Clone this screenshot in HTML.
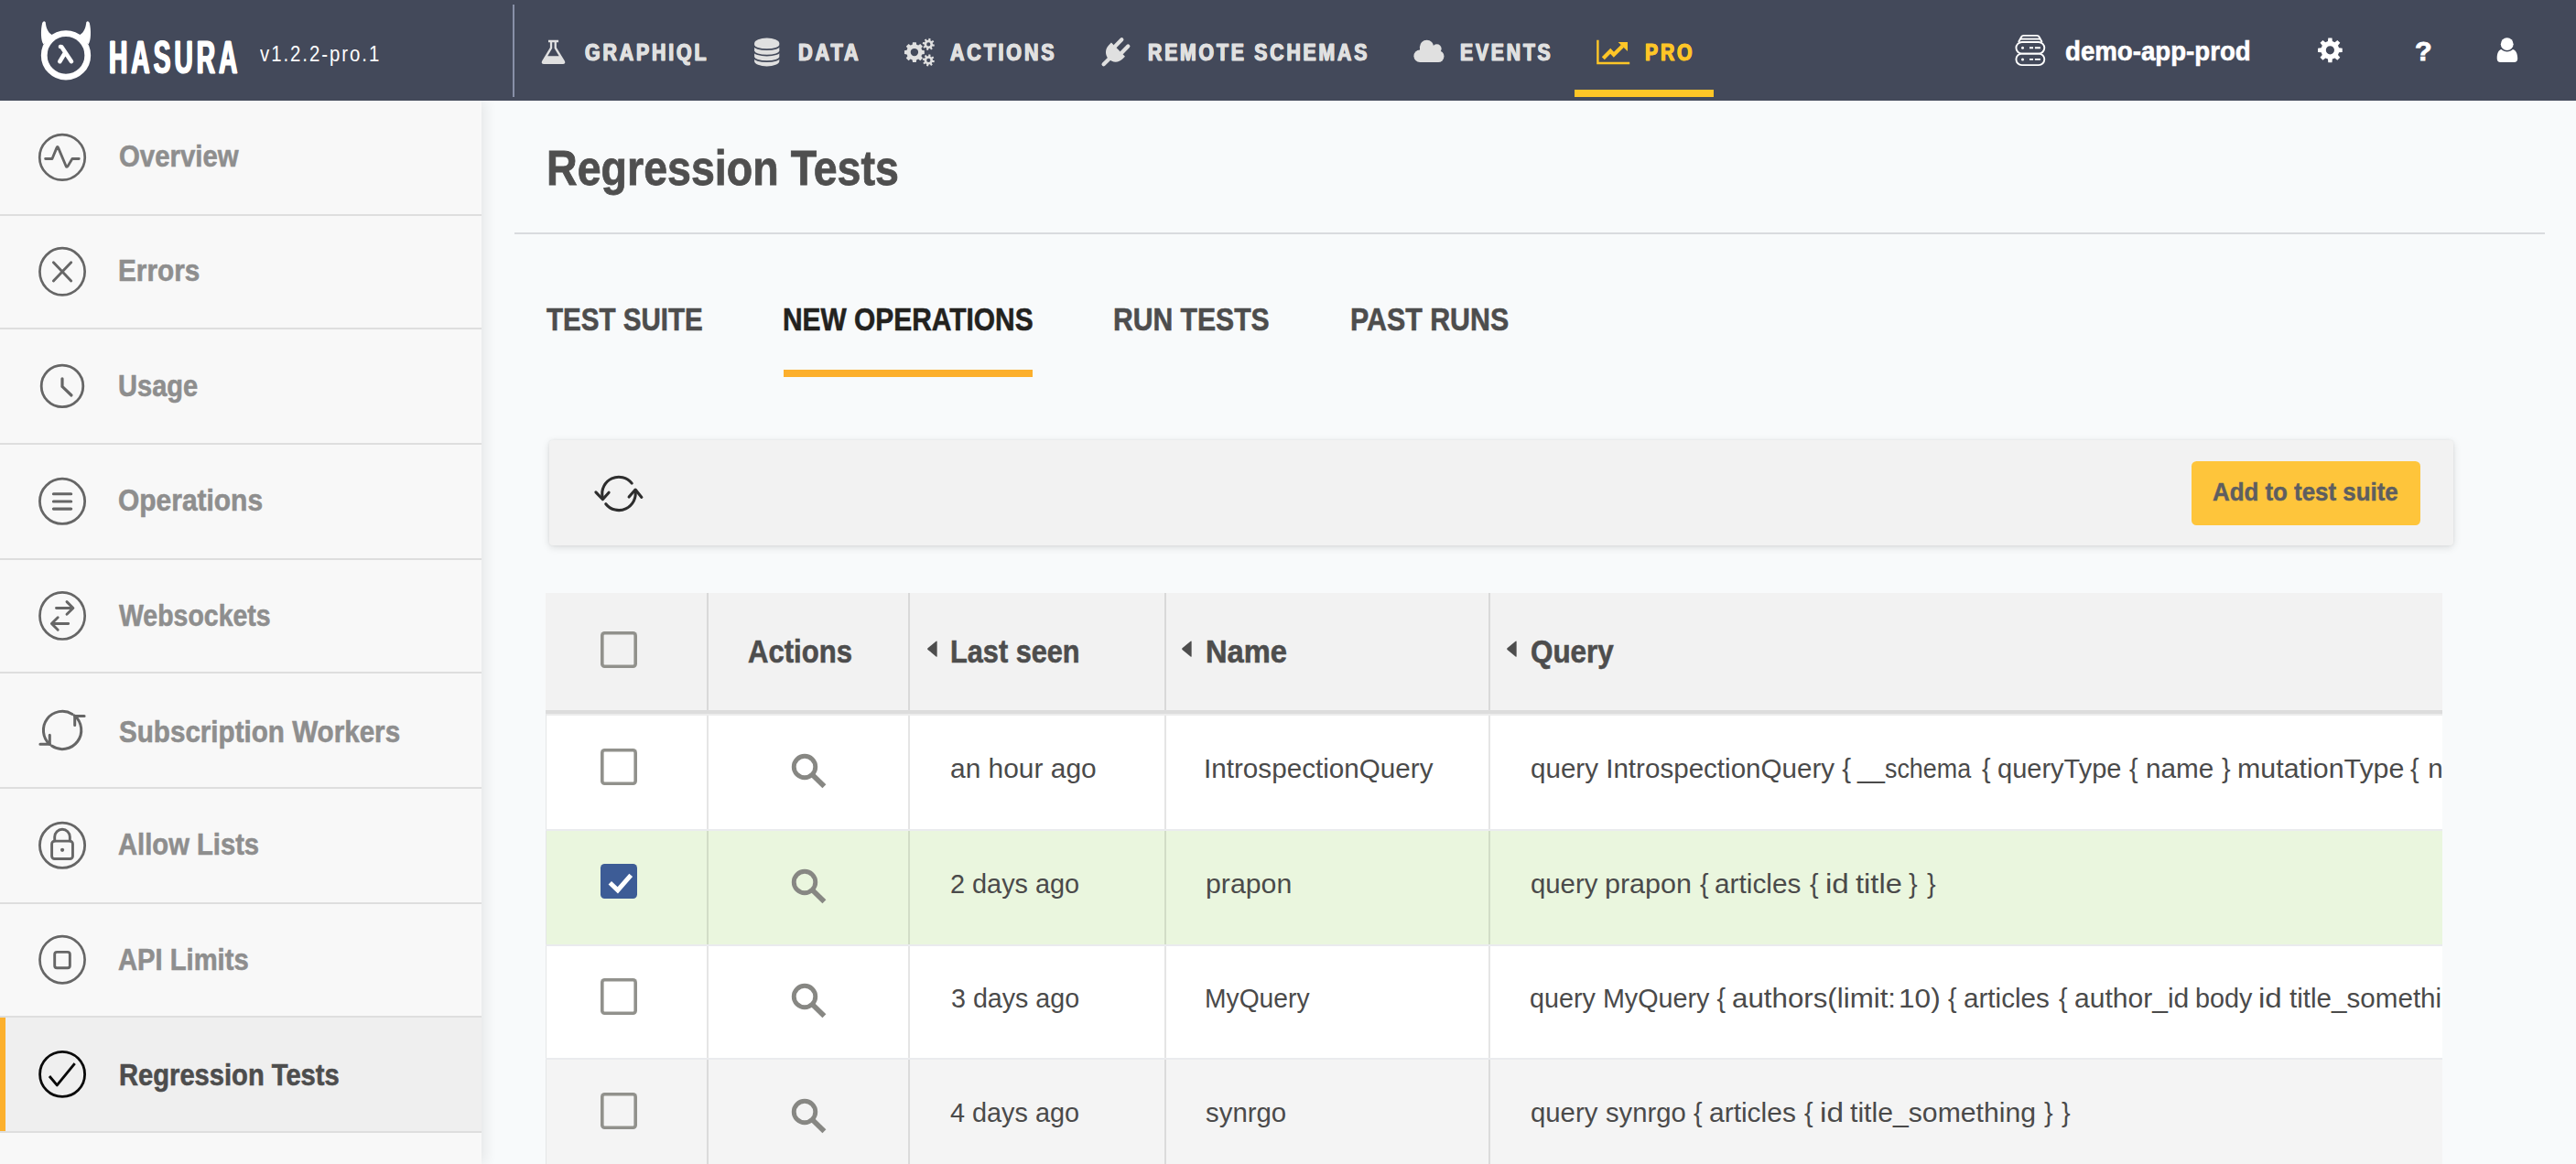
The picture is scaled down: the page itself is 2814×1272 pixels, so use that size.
<!DOCTYPE html>
<html lang="en">
<head>
<meta charset="utf-8">
<title>Regression Tests - Hasura Pro</title>
<style>
html,body{margin:0;padding:0}
body{width:2814px;height:1272px;overflow:hidden;position:relative;background:#f8fafb;font-family:"Liberation Sans",sans-serif}
.t{position:absolute;white-space:pre;line-height:1;transform-origin:0 50%;display:block;margin:0;padding:0}
header{position:absolute;left:0;top:0;width:2814px;height:109.7px;background:#43495a;z-index:5}
header .vdiv{position:absolute;left:560px;top:5px;width:2px;height:101px;background:#8890a8}
header .uline{position:absolute;left:1719.8px;top:97.6px;width:152.3px;height:8.6px;background:#fec627}
header svg{position:absolute}
aside{position:absolute;left:0;top:110px;width:526px;height:1162px;background:#f8f8f8;box-shadow:3px 0 14px rgba(0,0,0,0.09);z-index:3}
aside .sep{position:absolute;left:0;width:526px;height:2.1px;background:#dedede}
aside .active{position:absolute;left:0;top:1002.1px;width:526px;height:124.2px;background:#efefef}
aside .active i{position:absolute;left:0;top:0;width:5.9px;height:100%;background:#fcb02d}
aside svg{position:absolute;left:36px;top:0;width:64px;height:1162px}
main{position:absolute;left:0;top:0;width:2814px;height:1272px}
.hr{position:absolute;left:562px;top:254.1px;width:2218px;height:2px;background:#d9dbde}
.tabline{position:absolute;left:856px;top:403.9px;width:272px;height:7.9px;background:#fcaf2c}
.toolbar{position:absolute;left:599.9px;top:481.3px;width:2080.4px;height:114.7px;background:#f2f2f2;border-radius:4px;box-shadow:0 2px 8px rgba(0,0,0,0.13),0 0 3px rgba(0,0,0,0.06)}
.btn{position:absolute;left:2394px;top:504px;width:250.2px;height:69.8px;background:#fec53b;border-radius:5.5px}
.table{position:absolute;left:596px;top:648px;width:2072px;height:640px;overflow:hidden;background:#fff}
.thead{position:absolute;left:0;top:0;width:100%;height:128px;background:#f2f2f2;border-bottom:4px solid #dcdcdc}
.thead2{position:absolute;left:0;top:132px;width:100%;height:2px;background:#ececec}
.row{position:absolute;left:0;width:100%}
.rsep{position:absolute;left:0;width:100%;height:2px;background:#eaebee}
.lb{position:absolute;left:0;top:132px;width:1.4px;height:100%;background:#e4e6e7}
.col{position:absolute;width:2px;background:rgba(0,0,0,0.1)}
.col.h{top:0;height:128px}
.col.b{top:134px;height:520px}
.cb{position:absolute;left:656px;width:40px;height:40px;box-shadow:inset 0 0 0 3.6px #91918c;border-radius:4.5px}
.cb.on{background:#3d5c96;box-shadow:none;height:38.6px}
svg.abs{position:absolute}
</style>
</head>
<body>
<main>
<div class="hr"></div>
<div class="tabline"></div>
<div class="toolbar"></div>
<svg class="abs" style="left:640px;top:510px;width:72px;height:60px" viewBox="640 510 72 60" fill="none" stroke="#2e2e2e" stroke-width="3.1" stroke-linecap="round" stroke-linejoin="round">
<path d="M658.1 542.9 A18.2 18.2 0 0 1 690.2 528.1"/><path d="M693.9 535.9 A18.2 18.2 0 0 1 661.8 550.7"/>
<path d="M650.9 537.9 L658.4 545.7 L665.1 538.2"/><path d="M687.1 543.1 L694.1 535.1 L700.9 543.4"/>
</svg>
<div class="btn"></div>
<div class="table">
 <div class="thead"></div><div class="thead2"></div>
 <div class="row" style="top:134px;height:124px;background:#fff"></div>
 <div class="row" style="top:260px;height:124px;background:#eaf6de"></div>
 <div class="row" style="top:386px;height:122px;background:#fff"></div>
 <div class="row" style="top:510px;height:126px;background:#f4f4f4"></div>
 <div class="lb"></div>
 <div class="col h" style="left:176px"></div>
 <div class="col h" style="left:396px"></div>
 <div class="col h" style="left:676px"></div>
 <div class="col h" style="left:1030px"></div>
 <div class="col b" style="left:176px"></div>
 <div class="col b" style="left:396px"></div>
 <div class="col b" style="left:676px"></div>
 <div class="col b" style="left:1030px"></div>
 <div class="rsep" style="top:258px"></div>
 <div class="rsep" style="top:384px"></div>
 <div class="rsep" style="top:508px"></div>
<span class="t" style="left:1075.6px;top:177.1px;font-size:29.7px;font-weight:400;color:#4a4a4a;transform:scaleX(0.9963)">query IntrospectionQuery {</span>
<span class="t" style="left:1433.4px;top:177.1px;font-size:29.7px;font-weight:400;color:#4a4a4a;transform:scaleX(0.9066)">__schema</span>
<span class="t" style="left:1568.8px;top:177.1px;font-size:29.7px;font-weight:400;color:#4a4a4a;transform:scaleX(0.9700)">{</span>
<span class="t" style="left:1586.4px;top:177.1px;font-size:29.7px;font-weight:400;color:#4a4a4a;transform:scaleX(0.9772)">queryType</span>
<span class="t" style="left:1729.7px;top:177.1px;font-size:29.7px;font-weight:400;color:#4a4a4a;transform:scaleX(0.9700)">{</span>
<span class="t" style="left:1747.6px;top:177.1px;font-size:29.7px;font-weight:400;color:#4a4a4a;transform:scaleX(1.0014)">name</span>
<span class="t" style="left:1831.0px;top:177.1px;font-size:29.7px;font-weight:400;color:#4a4a4a;transform:scaleX(0.9700)">}</span>
<span class="t" style="left:1847.9px;top:177.1px;font-size:29.7px;font-weight:400;color:#4a4a4a;transform:scaleX(1.0234)">mutationType</span>
<span class="t" style="left:2037.2px;top:177.1px;font-size:29.7px;font-weight:400;color:#4a4a4a;transform:scaleX(0.9700)">{</span>
<span class="t" style="left:2056.2px;top:177.1px;font-size:29.7px;font-weight:400;color:#4a4a4a;transform:scaleX(1.0000)">name } subscriptionType { name } types { ...FullType } directives { name description locations args { ...InputValue } } } }</span>
<span class="t" style="left:1075.6px;top:302.5px;font-size:29.7px;font-weight:400;color:#4a4a4a;transform:scaleX(0.9877)">query</span>
<span class="t" style="left:1156.5px;top:302.5px;font-size:29.7px;font-weight:400;color:#4a4a4a;transform:scaleX(1.0270)">prapon</span>
<span class="t" style="left:1260.7px;top:302.5px;font-size:29.7px;font-weight:400;color:#4a4a4a;transform:scaleX(0.9700)">{</span>
<span class="t" style="left:1277.3px;top:302.5px;font-size:29.7px;font-weight:400;color:#4a4a4a;transform:scaleX(1.0043)">articles</span>
<span class="t" style="left:1380.9px;top:302.5px;font-size:29.7px;font-weight:400;color:#4a4a4a;transform:scaleX(0.9700)">{</span>
<span class="t" style="left:1397.7px;top:302.5px;font-size:29.7px;font-weight:400;color:#4a4a4a;transform:scaleX(1.1158)">id</span>
<span class="t" style="left:1430.5px;top:302.5px;font-size:29.7px;font-weight:400;color:#4a4a4a;transform:scaleX(1.1000)">title</span>
<span class="t" style="left:1489.3px;top:302.5px;font-size:29.7px;font-weight:400;color:#4a4a4a;transform:scaleX(0.9700)">}</span>
<span class="t" style="left:1509.0px;top:302.5px;font-size:29.7px;font-weight:400;color:#4a4a4a;transform:scaleX(0.9700)">}</span>
<span class="t" style="left:1075.1px;top:427.9px;font-size:29.7px;font-weight:400;color:#4a4a4a;transform:scaleX(0.9682)">query MyQuery {</span>
<span class="t" style="left:1296.0px;top:427.9px;font-size:29.7px;font-weight:400;color:#4a4a4a;transform:scaleX(1.0536)">authors(limit:</span>
<span class="t" style="left:1477.9px;top:427.9px;font-size:29.7px;font-weight:400;color:#4a4a4a;transform:scaleX(1.0641)">10)</span>
<span class="t" style="left:1531.7px;top:427.9px;font-size:29.7px;font-weight:400;color:#4a4a4a;transform:scaleX(0.9700)">{</span>
<span class="t" style="left:1548.7px;top:427.9px;font-size:29.7px;font-weight:400;color:#4a4a4a;transform:scaleX(0.9989)">articles</span>
<span class="t" style="left:1652.6px;top:427.9px;font-size:29.7px;font-weight:400;color:#4a4a4a;transform:scaleX(0.9700)">{</span>
<span class="t" style="left:1669.9px;top:427.9px;font-size:29.7px;font-weight:400;color:#4a4a4a;transform:scaleX(1.0124)">author_id</span>
<span class="t" style="left:1801.9px;top:427.9px;font-size:29.7px;font-weight:400;color:#4a4a4a;transform:scaleX(0.9710)">body</span>
<span class="t" style="left:1871.3px;top:427.9px;font-size:29.7px;font-weight:400;color:#4a4a4a;transform:scaleX(1.1158)">id</span>
<span class="t" style="left:1905.0px;top:427.9px;font-size:29.7px;font-weight:400;color:#4a4a4a;transform:scaleX(0.9970)">title_something } } }</span>
<span class="t" style="left:1075.6px;top:553.3px;font-size:29.7px;font-weight:400;color:#4a4a4a;transform:scaleX(0.9877)">query</span>
<span class="t" style="left:1157.6px;top:553.3px;font-size:29.7px;font-weight:400;color:#4a4a4a;transform:scaleX(0.9851)">synrgo</span>
<span class="t" style="left:1253.7px;top:553.3px;font-size:29.7px;font-weight:400;color:#4a4a4a;transform:scaleX(0.9700)">{</span>
<span class="t" style="left:1270.7px;top:553.3px;font-size:29.7px;font-weight:400;color:#4a4a4a;transform:scaleX(1.0087)">articles</span>
<span class="t" style="left:1374.8px;top:553.3px;font-size:29.7px;font-weight:400;color:#4a4a4a;transform:scaleX(0.9700)">{</span>
<span class="t" style="left:1391.5px;top:553.3px;font-size:29.7px;font-weight:400;color:#4a4a4a;transform:scaleX(1.1211)">id</span>
<span class="t" style="left:1424.8px;top:553.3px;font-size:29.7px;font-weight:400;color:#4a4a4a;transform:scaleX(1.0167)">title_something</span>
<span class="t" style="left:1637.1px;top:553.3px;font-size:29.7px;font-weight:400;color:#4a4a4a;transform:scaleX(0.9700)">}</span>
<span class="t" style="left:1656.1px;top:553.3px;font-size:29.7px;font-weight:400;color:#4a4a4a;transform:scaleX(0.9700)">}</span>
</div>
<div class="cb" style="top:690px"></div>
<div class="cb w" style="top:817.7px"></div>
<div class="cb on" style="top:943.6px"></div>
<div class="cb w" style="top:1068.5px"></div>
<div class="cb w" style="top:1193.9px"></div>
<svg class="abs" style="left:656px;top:943px;width:40px;height:40px" viewBox="656 943 40 40" fill="none" stroke="#fff" stroke-width="5"><path d="M666.3 964.8 L674.8 972.8 L689.2 956.3"/></svg>
<svg class="abs" style="left:1010.00px;top:697px;width:16px;height:24px" viewBox="1010 697 16 24"><path d="M1023.65 701.3 Q1023.65 699.9 1022.6 700.8 L1013.5 708.3 Q1012.7 709.1 1013.5 709.9 L1022.6 717.4 Q1023.65 718.3 1023.65 716.9 Z" fill="#4d4d4d"/></svg>
<svg class="abs" style="left:1288.45px;top:697px;width:16px;height:24px" viewBox="1010 697 16 24"><path d="M1023.65 701.3 Q1023.65 699.9 1022.6 700.8 L1013.5 708.3 Q1012.7 709.1 1013.5 709.9 L1022.6 717.4 Q1023.65 718.3 1023.65 716.9 Z" fill="#4d4d4d"/></svg>
<svg class="abs" style="left:1642.70px;top:697px;width:16px;height:24px" viewBox="1010 697 16 24"><path d="M1023.65 701.3 Q1023.65 699.9 1022.6 700.8 L1013.5 708.3 Q1012.7 709.1 1013.5 709.9 L1022.6 717.4 Q1023.65 718.3 1023.65 716.9 Z" fill="#4d4d4d"/></svg>
<svg class="abs" style="left:858.55px;top:818.40px;width:48px;height:48px" viewBox="-20 -20 48 48" fill="none" stroke="#878783"><circle cx="0" cy="0" r="11.75" stroke-width="4.9"/><path d="M8.3 8.4 L21.4 21.3" stroke-width="5.6"/></svg>
<svg class="abs" style="left:858.55px;top:943.80px;width:48px;height:48px" viewBox="-20 -20 48 48" fill="none" stroke="#878783"><circle cx="0" cy="0" r="11.75" stroke-width="4.9"/><path d="M8.3 8.4 L21.4 21.3" stroke-width="5.6"/></svg>
<svg class="abs" style="left:858.55px;top:1069.20px;width:48px;height:48px" viewBox="-20 -20 48 48" fill="none" stroke="#878783"><circle cx="0" cy="0" r="11.75" stroke-width="4.9"/><path d="M8.3 8.4 L21.4 21.3" stroke-width="5.6"/></svg>
<svg class="abs" style="left:858.55px;top:1194.60px;width:48px;height:48px" viewBox="-20 -20 48 48" fill="none" stroke="#878783"><circle cx="0" cy="0" r="11.75" stroke-width="4.9"/><path d="M8.3 8.4 L21.4 21.3" stroke-width="5.6"/></svg>
<span class="t" style="left:596.6px;top:156.9px;font-size:53.3px;font-weight:700;color:#4f4f4f;transform:scaleX(0.8741);-webkit-text-stroke:0.8px #4f4f4f">Regression Tests</span>
<span class="t" style="left:596.8px;top:332.3px;font-size:34.7px;font-weight:700;color:#4d4d4d;transform:scaleX(0.8518);-webkit-text-stroke:0.6px #4d4d4d">TEST SUITE</span>
<span class="t" style="left:855.0px;top:332.3px;font-size:34.7px;font-weight:700;color:#23221e;transform:scaleX(0.8621);-webkit-text-stroke:0.6px #23221e">NEW OPERATIONS</span>
<span class="t" style="left:1215.6px;top:332.3px;font-size:34.7px;font-weight:700;color:#4d4d4d;transform:scaleX(0.8680);-webkit-text-stroke:0.6px #4d4d4d">RUN TESTS</span>
<span class="t" style="left:1474.5px;top:332.3px;font-size:34.7px;font-weight:700;color:#4d4d4d;transform:scaleX(0.8754);-webkit-text-stroke:0.6px #4d4d4d">PAST RUNS</span>
<span class="t" style="left:2417.2px;top:524.1px;font-size:27.9px;font-weight:700;color:#5e5e60;transform:scaleX(0.9276);-webkit-text-stroke:0.5px #5e5e60">Add to test suite</span>
<span class="t" style="left:817.3px;top:694.3px;font-size:35.2px;font-weight:700;color:#4d4d4d;transform:scaleX(0.8831);-webkit-text-stroke:0.6px #4d4d4d">Actions</span>
<span class="t" style="left:1038.3px;top:694.3px;font-size:35.2px;font-weight:700;color:#4d4d4d;transform:scaleX(0.8723);-webkit-text-stroke:0.6px #4d4d4d">Last seen</span>
<span class="t" style="left:1316.9px;top:694.3px;font-size:35.2px;font-weight:700;color:#4d4d4d;transform:scaleX(0.9274);-webkit-text-stroke:0.6px #4d4d4d">Name</span>
<span class="t" style="left:1671.6px;top:694.3px;font-size:35.2px;font-weight:700;color:#4d4d4d;transform:scaleX(0.8921);-webkit-text-stroke:0.6px #4d4d4d">Query</span>
<span class="t" style="left:1038.1px;top:825.1px;font-size:29.7px;font-weight:400;color:#4a4a4a;transform:scaleX(1.0077)">an hour ago</span>
<span class="t" style="left:1315.3px;top:825.1px;font-size:29.7px;font-weight:400;color:#4a4a4a;transform:scaleX(0.9988)">IntrospectionQuery</span>
<span class="t" style="left:1037.7px;top:950.5px;font-size:29.7px;font-weight:400;color:#4a4a4a;transform:scaleX(0.9718)">2 days ago</span>
<span class="t" style="left:1316.8px;top:950.5px;font-size:29.7px;font-weight:400;color:#4a4a4a;transform:scaleX(1.0191)">prapon</span>
<span class="t" style="left:1038.6px;top:1075.9px;font-size:29.7px;font-weight:400;color:#4a4a4a;transform:scaleX(0.9650)">3 days ago</span>
<span class="t" style="left:1315.9px;top:1075.9px;font-size:29.7px;font-weight:400;color:#4a4a4a;transform:scaleX(0.9508)">MyQuery</span>
<span class="t" style="left:1037.8px;top:1201.3px;font-size:29.7px;font-weight:400;color:#4a4a4a;transform:scaleX(0.9706)">4 days ago</span>
<span class="t" style="left:1317.3px;top:1201.3px;font-size:29.7px;font-weight:400;color:#4a4a4a;transform:scaleX(0.9897)">synrgo</span>
</main>
<aside>
<div class="active"><i></i></div>
<div class="sep" style="top:124.00px"></div>
<div class="sep" style="top:247.90px"></div>
<div class="sep" style="top:374.05px"></div>
<div class="sep" style="top:499.85px"></div>
<div class="sep" style="top:623.80px"></div>
<div class="sep" style="top:749.85px"></div>
<div class="sep" style="top:875.90px"></div>
<div class="sep" style="top:1000.10px"></div>
<div class="sep" style="top:1126.30px"></div>
<svg viewBox="36 110 64 1162" fill="none" stroke="#666666" stroke-width="2.7" stroke-linecap="round" stroke-linejoin="round">
<ellipse cx="68" cy="171.9" rx="24.75" ry="24.75"/><path d="M49.6 173.5 H57 L61.9 161.6 Q62.8 159.4 63.7 161.6 L72 181.3 Q73 183.5 74.2 181.4 L78.9 173.5 H86.3" stroke-width="2.8"/>
<ellipse cx="68.05" cy="296.8" rx="24.6" ry="25.6"/><path d="M58.4 286.7 L77.7 306.9 M77.7 286.7 L58.4 306.9" stroke-width="2.9"/>
<circle cx="68" cy="421.9" r="22.8" stroke-width="2.8"/><path d="M68 413.8 V422.4 L78 432" stroke-width="3.2"/>
<circle cx="68.05" cy="547.8" r="24.6" stroke-width="2.8"/><path d="M58.4 539.8 H77.7 M58.4 548 H77.7 M58.4 556.1 H77.7" stroke-width="3.1"/>
<ellipse cx="68.1" cy="672.9" rx="24.6" ry="25.6"/><path d="M61.5 664.5 H79.4 M73 657.6 L79.9 664.5 L73 671.2 M74.7 681.5 H56.8 M63.2 674.7 L56.4 681.5 L63.2 688.2" stroke-width="2.9"/>
<g stroke-width="3"><path d="M81.15 781.89 A20.7 20.7 0 0 1 56.52 815.11"/><path d="M54.38 813.45 A20.7 20.7 0 0 1 79.07 780.40"/><path d="M92.1 782.6 H81.7 V792.6 M43.9 813.2 H54.3 V803.2"/></g>
<circle cx="68.05" cy="923.8" r="24.6" stroke-width="2.8"/><rect x="56.6" y="919.15" width="22.85" height="19.4" rx="3" stroke-width="2.9"/><path d="M59.7 919 V914.6 A8.3 8.3 0 0 1 76.35 914.6 V919" stroke-width="2.9"/><circle cx="68.07" cy="928.85" r="2.1" fill="#666666" stroke="none"/>
<ellipse cx="68.05" cy="1048.7" rx="24.55" ry="25.6"/><rect x="59.7" y="1040.4" width="16.65" height="17.35" rx="2.5" stroke-width="2.9"/>
<g stroke="#0a0a0a"><circle cx="68.1" cy="1173.9" r="24.5" stroke-width="2.8"/><path d="M54 1176 L62.3 1185.9 L81.7 1162.1" stroke-width="2.9" stroke-linecap="butt"/></g>
</svg>
<span class="t" style="left:129.5px;top:43.5px;font-size:33.5px;font-weight:700;color:#8e8e8e;transform:scaleX(0.8764);-webkit-text-stroke:0.6px #8e8e8e">Overview</span>
<span class="t" style="left:129.0px;top:169.0px;font-size:33.5px;font-weight:700;color:#8e8e8e;transform:scaleX(0.8878);-webkit-text-stroke:0.6px #8e8e8e">Errors</span>
<span class="t" style="left:129.3px;top:295.1px;font-size:33.5px;font-weight:700;color:#8e8e8e;transform:scaleX(0.8673);-webkit-text-stroke:0.6px #8e8e8e">Usage</span>
<span class="t" style="left:129.1px;top:420.0px;font-size:33.5px;font-weight:700;color:#8e8e8e;transform:scaleX(0.8937);-webkit-text-stroke:0.6px #8e8e8e">Operations</span>
<span class="t" style="left:129.6px;top:545.5px;font-size:33.5px;font-weight:700;color:#8e8e8e;transform:scaleX(0.8500);-webkit-text-stroke:0.6px #8e8e8e">Websockets</span>
<span class="t" style="left:130.1px;top:672.6px;font-size:33.5px;font-weight:700;color:#8e8e8e;transform:scaleX(0.8838);-webkit-text-stroke:0.6px #8e8e8e">Subscription Workers</span>
<span class="t" style="left:128.9px;top:795.6px;font-size:33.5px;font-weight:700;color:#8e8e8e;transform:scaleX(0.8714);-webkit-text-stroke:0.6px #8e8e8e">Allow Lists</span>
<span class="t" style="left:128.9px;top:922.0px;font-size:33.5px;font-weight:700;color:#8e8e8e;transform:scaleX(0.8710);-webkit-text-stroke:0.6px #8e8e8e">API Limits</span>
<span class="t" style="left:129.9px;top:1047.5px;font-size:33.5px;font-weight:700;color:#4d4d4d;transform:scaleX(0.8697);-webkit-text-stroke:0.6px #4d4d4d">Regression Tests</span>
</aside>
<header>
<div class="vdiv"></div>
<svg style="left:40px;top:18px;width:64px;height:76px" viewBox="40 18 64 76"><g fill="#fff"><path d="M46.2 25 Q47.9 22 49.7 24.3 C50.3 30 52 35.5 57 38.3 L47.5 48.5 C44.6 45 44.2 33 46.2 25 Z"/><path d="M97.8 25 Q96.1 22 94.3 24.3 C93.7 30 92 35.5 87 38.3 L96.5 48.5 C99.4 45 99.8 33 97.8 25 Z"/></g><circle cx="72" cy="60.4" r="23.75" fill="none" stroke="#fff" stroke-width="6.8"/><path d="M66 51 L67.3 51.2 L78 67.2 M70.6 58.5 L65.3 67.2" fill="none" stroke="#fff" stroke-width="4.6" stroke-linecap="round" stroke-linejoin="round"/></svg>
<svg style="left:588px;top:40px;width:34px;height:34px" viewBox="588 40 34 34"><path fill="#e0e0e0" fill-rule="evenodd" d="M599 43.7 H610.1 V46.2 H607.9 V52 L616.8 66.5 C618 68.6 617 70.1 615 70.1 H594 C592 70.1 591 68.6 592.200 66.5 L600.9 52 V46.2 H599 Z M603.2 46.2 V52.8 L598.2 61.2 H610.7 L605.6 52.8 V46.2 Z"/></svg>
<svg style="left:820px;top:38px;width:36px;height:38px" viewBox="820 38 36 38"><path fill="#e0e0e0" d="M824.1 47.2 A13.6 5.7 0 0 1 851.3 47.2 V66.7 A13.6 5.7 0 0 1 824.1 66.7 Z"/><g fill="none" stroke="#43495a" stroke-width="1.7"><path d="M823.5 49.6 A14.2 4.6 0 0 0 851.9 49.6"/><path d="M823.5 56 A14.2 4.6 0 0 0 851.9 56"/><path d="M823.5 62.6 A14.2 4.6 0 0 0 851.9 62.6"/></g></svg>
<svg style="left:984px;top:38px;width:40px;height:38px" viewBox="984 38 40 38"><g fill="#e0e0e0" fill-rule="evenodd"><path d="M1007.19 54.81 L1009.83 55.19 L1009.83 59.01 L1007.19 59.39 L1006.38 61.34 L1007.98 63.48 L1005.28 66.18 L1003.14 64.58 L1001.19 65.39 L1000.81 68.03 L996.99 68.03 L996.61 65.39 L994.66 64.58 L992.52 66.18 L989.82 63.48 L991.42 61.34 L990.61 59.39 L987.97 59.01 L987.97 55.19 L990.61 54.81 L991.42 52.86 L989.82 50.72 L992.52 48.02 L994.66 49.62 L996.61 48.81 L996.99 46.17 L1000.81 46.17 L1001.19 48.81 L1003.14 49.62 L1005.28 48.02 L1007.98 50.72 L1006.38 52.86 Z M994.70 57.10 A4.2 4.2 0 1 0 1003.10 57.10 A4.2 4.2 0 1 0 994.70 57.10 Z"/><path d="M1019.00 48.19 L1020.89 48.68 L1020.48 50.71 L1018.54 50.43 L1017.77 51.57 L1018.76 53.26 L1017.04 54.40 L1015.87 52.83 L1014.51 53.10 L1014.02 54.99 L1011.99 54.58 L1012.27 52.64 L1011.13 51.87 L1009.44 52.86 L1008.30 51.14 L1009.87 49.97 L1009.60 48.61 L1007.71 48.12 L1008.12 46.09 L1010.06 46.37 L1010.83 45.23 L1009.84 43.54 L1011.56 42.40 L1012.73 43.97 L1014.09 43.70 L1014.58 41.81 L1016.61 42.22 L1016.33 44.16 L1017.47 44.93 L1019.16 43.94 L1020.30 45.66 L1018.73 46.83 Z M1012.20 48.40 A2.1 2.1 0 1 0 1016.40 48.40 A2.1 2.1 0 1 0 1012.20 48.40 Z"/><path d="M1019.00 65.69 L1020.89 66.18 L1020.48 68.21 L1018.54 67.93 L1017.77 69.07 L1018.76 70.76 L1017.04 71.90 L1015.87 70.33 L1014.51 70.60 L1014.02 72.49 L1011.99 72.08 L1012.27 70.14 L1011.13 69.37 L1009.44 70.36 L1008.30 68.64 L1009.87 67.47 L1009.60 66.11 L1007.71 65.62 L1008.12 63.59 L1010.06 63.87 L1010.83 62.73 L1009.84 61.04 L1011.56 59.90 L1012.73 61.47 L1014.09 61.20 L1014.58 59.31 L1016.61 59.72 L1016.33 61.66 L1017.47 62.43 L1019.16 61.44 L1020.30 63.16 L1018.73 64.33 Z M1012.20 65.90 A2.1 2.1 0 1 0 1016.40 65.90 A2.1 2.1 0 1 0 1012.20 65.90 Z"/></g></svg>
<svg style="left:1200px;top:38px;width:38px;height:38px" viewBox="1200 38 38 38"><path fill="#e0e0e0" d="M1213.95 46.6 L1229 61.7 L1226.2 64.5 A10.66 10.66 0 0 1 1211.1 49.4 Z"/><g fill="none" stroke="#e0e0e0" stroke-width="4.25" stroke-linecap="round"><path d="M1218.5 50.2 L1225.35 43.3"/><path d="M1225.5 57.5 L1232.3 50.5"/><path d="M1212.5 63.5 L1205.6 70.3"/></g></svg>
<svg style="left:1540px;top:40px;width:42px;height:32px" viewBox="1540 40 42 32"><g fill="#e0e0e0"><circle cx="1558.600" cy="51.400" r="7.700"/><circle cx="1569.600" cy="53.200" r="5"/><circle cx="1551.100" cy="61.300" r="6.700"/><circle cx="1571.100" cy="61.600" r="6.400"/><rect x="1551" y="52" width="20.500" height="16"/></g></svg>
<svg style="left:1740px;top:40px;width:44px;height:34px" viewBox="1740 40 44 34"><g fill="none" stroke="#fec627"><path d="M1745.400 43.7 V69 H1780.200" stroke-width="2.400"/><path d="M1751.300 63.700 L1759.200 55.700 L1762.900 59.700 L1772.500 50.300" stroke-width="4.200"/><path d="M1767.600 46.100 H1778 V55.900 Z" fill="#fec627" stroke="none"/></g></svg>
<svg style="left:2198px;top:34px;width:40px;height:42px" viewBox="2198 34 40 42"><g fill="none" stroke="#fff" stroke-width="1.9"><path d="M2205 46 L2208.300 40 C2208.800 39 2209.500 38.900 2210.500 38.900 H2225.200 C2226.200 38.900 2226.900 39 2227.400 40 L2230.700 46"/><path d="M2207 42.600 H2228.700"/><rect x="2202.400" y="46" width="30.900" height="12.600" rx="6.300"/><rect x="2202.400" y="58.600" width="30.900" height="12.500" rx="6.250"/><path d="M2217 52.300 H2221 M2222.900 52.300 H2228.900 M2217 64.900 H2221 M2222.900 64.900 H2228.900"/></g><circle cx="2209.500" cy="52.300" r="1.500" fill="#fff"/><circle cx="2209.500" cy="64.900" r="1.500" fill="#fff"/></svg>
<svg style="left:2528px;top:38px;width:36px;height:36px" viewBox="2528 38 36 36"><path fill="#fff" fill-rule="evenodd" d="M2555.10 52.37 L2558.73 52.69 L2558.73 56.91 L2555.10 57.23 L2553.98 59.94 L2556.32 62.74 L2553.34 65.72 L2550.54 63.38 L2547.83 64.50 L2547.51 68.13 L2543.29 68.13 L2542.97 64.50 L2540.26 63.38 L2537.46 65.72 L2534.48 62.74 L2536.82 59.94 L2535.70 57.23 L2532.07 56.91 L2532.07 52.69 L2535.70 52.37 L2536.82 49.66 L2534.48 46.86 L2537.46 43.88 L2540.26 46.22 L2542.97 45.10 L2543.29 41.47 L2547.51 41.47 L2547.83 45.10 L2550.54 46.22 L2553.34 43.88 L2556.32 46.86 L2553.98 49.66 Z M2540.80 54.80 A4.6 4.6 0 1 0 2550.00 54.80 A4.6 4.6 0 1 0 2540.80 54.80 Z"/></svg>
<svg style="left:2724px;top:38px;width:30px;height:34px" viewBox="2724 38 30 34"><g fill="#fff"><circle cx="2738.700" cy="48.200" r="6.900"/><path d="M2727.700 64 C2727.700 58 2729.500 54.500 2732.500 54 C2734 55.600 2736.200 56.500 2738.700 56.500 C2741.200 56.500 2743.400 55.600 2744.900 54 C2747.900 54.500 2750.200 58 2750.200 64 C2750.200 66.600 2748.800 68.100 2746.500 68.100 H2731.400 C2729.100 68.100 2727.700 66.600 2727.700 64 Z"/></g></svg>
<div class="uline"></div>
<span class="t" style="left:118.8px;top:38.0px;font-size:50px;font-weight:700;color:#ffffff;transform:scaleX(0.5640);letter-spacing:7px;-webkit-text-stroke:1.0px #ffffff;text-shadow:1.3px 0 #ffffff,-1.3px 0 #ffffff">HASURA</span>
<span class="t" style="left:283.8px;top:48.4px;font-size:23px;font-weight:400;color:#ffffff;transform:scaleX(0.8863);letter-spacing:2.2px">v1.2.2-pro.1</span>
<span class="t" style="left:638.9px;top:45.4px;font-size:25.7px;font-weight:700;color:#e0e0e0;transform:scaleX(0.8314);letter-spacing:3.4px;-webkit-text-stroke:1.0px #e0e0e0;text-shadow:0.6px 0 #e0e0e0,-0.6px 0 #e0e0e0">GRAPHIQL</span>
<span class="t" style="left:872.0px;top:45.4px;font-size:25.7px;font-weight:700;color:#e0e0e0;transform:scaleX(0.8448);letter-spacing:3.4px;-webkit-text-stroke:1.0px #e0e0e0;text-shadow:0.6px 0 #e0e0e0,-0.6px 0 #e0e0e0">DATA</span>
<span class="t" style="left:1037.9px;top:45.4px;font-size:25.7px;font-weight:700;color:#e0e0e0;transform:scaleX(0.8346);letter-spacing:3.4px;-webkit-text-stroke:1.0px #e0e0e0;text-shadow:0.6px 0 #e0e0e0,-0.6px 0 #e0e0e0">ACTIONS</span>
<span class="t" style="left:1253.6px;top:45.4px;font-size:25.7px;font-weight:700;color:#e0e0e0;transform:scaleX(0.8263);letter-spacing:3.4px;-webkit-text-stroke:1.0px #e0e0e0;text-shadow:0.6px 0 #e0e0e0,-0.6px 0 #e0e0e0">REMOTE SCHEMAS</span>
<span class="t" style="left:1595.3px;top:45.4px;font-size:25.7px;font-weight:700;color:#e0e0e0;transform:scaleX(0.8244);letter-spacing:3.4px;-webkit-text-stroke:1.0px #e0e0e0;text-shadow:0.6px 0 #e0e0e0,-0.6px 0 #e0e0e0">EVENTS</span>
<span class="t" style="left:1796.8px;top:45.4px;font-size:25.7px;font-weight:700;color:#fec627;transform:scaleX(0.8246);letter-spacing:3.4px;-webkit-text-stroke:1.0px #fec627;text-shadow:0.6px 0 #fec627,-0.6px 0 #fec627">PRO</span>
<span class="t" style="left:2256.3px;top:41.2px;font-size:29.5px;font-weight:700;color:#ffffff;transform:scaleX(0.9371);-webkit-text-stroke:0.6px #ffffff">demo-app-prod</span>
<span class="t" style="left:2638.2px;top:40.6px;font-size:30px;font-weight:700;color:#ffffff;transform:scaleX(1.0188);-webkit-text-stroke:0.9px #ffffff">?</span>
</header>
</body>
</html>
